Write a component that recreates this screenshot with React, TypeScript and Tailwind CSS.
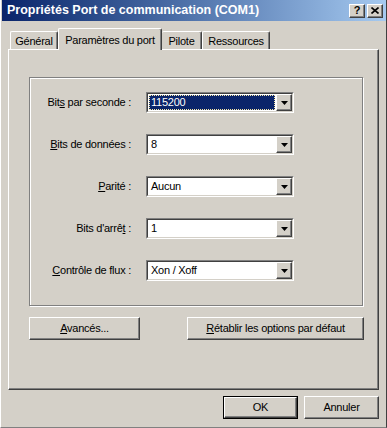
import React from "react";

const raised =
  "border border-t-white border-l-white border-r-[#404040] border-b-[#404040] shadow-[inset_-1px_-1px_0_#808080] bg-[#d4d0c8]";

function Combo({ value, focused }: { value: string; focused?: boolean }) {
  return (
    <div className="w-[148px] h-[21px] flex border border-t-[#808080] border-l-[#808080] border-r-white border-b-white bg-white">
      <div className="flex-1 flex border border-t-[#404040] border-l-[#404040] border-r-[#d4d0c8] border-b-[#d4d0c8]">
        <div className="flex-1 flex items-center p-px">
          {focused ? (
            <div className="flex-1 h-full bg-[#0a246a] text-white outline outline-1 outline-dotted outline-[#f6e7a8] -outline-offset-1 flex items-center pl-[2px]">
              {value}
            </div>
          ) : (
            <div className="flex-1 h-full flex items-center pl-[2px] text-black">{value}</div>
          )}
        </div>
        <div className={`w-[16px] h-full flex items-center justify-center pt-px ${raised}`}>
          <svg width="7" height="4" viewBox="0 0 7 4">
            <path d="M0 0h7L3.5 4z" fill="#000" />
          </svg>
        </div>
      </div>
    </div>
  );
}

function Row({ label, value, focused }: { label: React.ReactNode; value: string; focused?: boolean }) {
  return (
    <div className="flex items-center">
      <div className="w-[102px] text-right pr-px">{label}</div>
      <div className="ml-[14px]">
        <Combo value={value} focused={focused} />
      </div>
    </div>
  );
}

function Button({ children, w, def }: { children: React.ReactNode; w: string; def?: boolean }) {
  const inner = (
    <div className={`h-full w-full flex items-center justify-center ${raised}`}>{children}</div>
  );
  return def ? (
    <div className={`${w} h-[23px] border border-black flex`}>{inner}</div>
  ) : (
    <div className={`${w} h-[23px] flex`}>{inner}</div>
  );
}

export default function App() {
  return (
    <div className="w-[387px] h-[428px] bg-[#d4d0c8] flex flex-col border-l border-l-white border-r border-r-[#404040] border-b border-b-[#808080] font-['Liberation_Sans',Arial,sans-serif] text-[11px] tracking-[-0.25px] text-black select-none">
      {/* Title bar */}
      <div className="h-[21px] ml-px flex items-center bg-linear-to-r from-[#0a246a] to-[#a6caf0] pl-[5px] pr-[3px]">
        <span className="text-white font-bold text-[12.5px] tracking-[0px]">Propriétés Port de communication (COM1)</span>
        <div className="ml-auto flex gap-[2px]">
          <div className={`w-[16px] h-[14px] flex items-center justify-center font-bold text-[11px] leading-none ${raised}`}>?</div>
          <div className={`w-[16px] h-[14px] flex items-center justify-center ${raised}`}>
            <svg width="8" height="7" viewBox="0 0 8 7">
              <path d="M0.5 0.5l7 6M7.5 0.5l-7 6" stroke="#000" strokeWidth="1.6" />
            </svg>
          </div>
        </div>
      </div>

      {/* Tabs */}
      <div className="mt-[7px] h-[21px] ml-[9px] flex items-end">
        <div className="w-[48px] h-[18px] flex items-center justify-center border-t border-l border-white border-r border-r-[#404040] rounded-t-[2px] shadow-[inset_-1px_0_0_#808080] pt-px">
          Général
        </div>
        <div className="w-[104px] h-[22px] -mb-px relative z-10 bg-[#d4d0c8] flex items-start justify-center pt-[3px] border-t border-l border-white border-r border-r-[#404040] rounded-t-[2px] shadow-[inset_-1px_0_0_#808080]">
          Paramètres du port
        </div>
        <div className="w-[40px] h-[18px] flex items-center justify-center border-t border-white border-r border-r-[#404040] rounded-t-[2px] shadow-[inset_-1px_0_0_#808080] pt-px">
          Pilote
        </div>
        <div className="w-[68px] h-[18px] flex items-center justify-center border-t border-l border-white border-r border-r-[#404040] rounded-t-[2px] shadow-[inset_-1px_0_0_#808080] pt-px">
          Ressources
        </div>
      </div>

      {/* Tab page */}
      <div className="ml-[7px] w-[371px] h-[341px] border border-t-white border-l-white border-r-[#404040] border-b-[#404040] shadow-[inset_-1px_-1px_0_#808080] flex flex-col">
        <div className="ml-[20px] mt-[27px] w-[334px] h-[229px] border border-[#808080] shadow-[inset_1px_1px_0_#fff,1px_1px_0_#fff] flex flex-col gap-[21px] pt-[14px]">
          <Row label={<>Bit<u>s</u> par seconde :</>} value="115200" focused />
          <Row label={<><u>B</u>its de données :</>} value="8" />
          <Row label={<><u>P</u>arité :</>} value="Aucun" />
          <Row label={<>Bits d'arrê<u>t</u> :</>} value="1" />
          <Row label={<><u>C</u>ontrôle de flux :</>} value="Xon / Xoff" />
        </div>
        <div className="ml-[20px] mt-[11px] w-[335px] flex justify-between">
          <Button w="w-[111px]">
            <span><u>A</u>vancés...</span>
          </Button>
          <Button w="w-[177px]">
            <span><u>R</u>établir les options par défaut</span>
          </Button>
        </div>
      </div>

      {/* Dialog buttons */}
      <div className="mt-[6px] flex justify-end gap-[6px] pr-[7px]">
        <Button w="w-[75px]" def>
          OK
        </Button>
        <Button w="w-[75px]">Annuler</Button>
      </div>
    </div>
  );
}
